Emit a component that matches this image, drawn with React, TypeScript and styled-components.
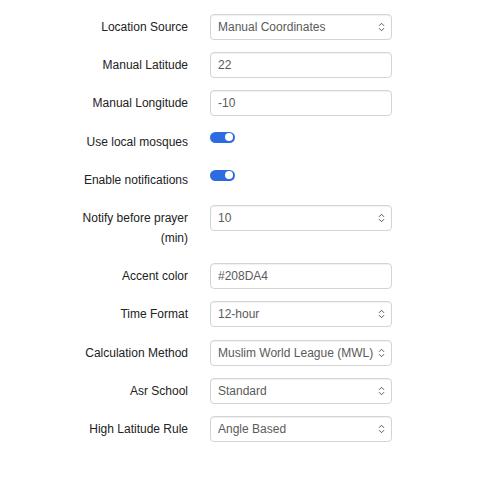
import styled, { createGlobalStyle } from 'styled-components';

const GlobalStyle = createGlobalStyle`
  body {
    margin: 0;
    background: #fff;
    font-family: "Liberation Sans", Arial, sans-serif;
  }
`;

const Form = styled.form`
  padding: 14px 0 0 68px;
`;

const Row = styled.div`
  display: grid;
  grid-template-columns: 120px 182px;
  column-gap: 22px;
  align-items: start;
  margin-bottom: 12.2px;
`;

const Label = styled.label`
  text-align: right;
  font-size: 12px;
  line-height: 20px;
  padding: 3px 0;
  color: #222;
`;

const fieldBase = `
  box-sizing: border-box;
  width: 100%;
  height: 26px;
  padding: 0 7px;
  border: 1px solid #d4d4d4;
  border-radius: 4px;
  background: #fff;
  box-shadow: inset 0 1px 1px rgba(0, 0, 0, 0.06);
  font-family: "Liberation Sans", Arial, sans-serif;
  font-size: 12px;
  color: #5a5a5a;
  outline: none;
`;

const TextInput = styled.input`
  ${fieldBase}
`;

const SelectWrap = styled.div`
  position: relative;
`;

const Select = styled.select`
  ${fieldBase}
  appearance: none;
  -webkit-appearance: none;
  padding-right: 14px;
`;

const Chevron = styled.svg`
  position: absolute;
  right: 7px;
  top: 8px;
  pointer-events: none;
`;

const Toggle = styled.span<{ $on: boolean }>`
  display: flex;
  justify-content: ${(p) => (p.$on ? 'flex-end' : 'flex-start')};
  align-items: center;
  box-sizing: border-box;
  width: 25px;
  height: 11px;
  margin-top: 3px;
  padding: 0 2px;
  border-radius: 6px;
  background: ${(p) => (p.$on ? '#2e6be0' : '#ccc')};
`;

const Knob = styled.span`
  width: 8px;
  height: 8px;
  border-radius: 50%;
  background: #fff;
`;

const SelectField = ({ value }: { value: string }) => (
  <SelectWrap>
    <Select defaultValue={value}>
      <option>{value}</option>
    </Select>
    <Chevron width="7" height="10" viewBox="0 0 7 10" fill="none" stroke="#555" strokeWidth="1">
      <path d="M1 3.8 L3.5 1.3 L6 3.8" />
      <path d="M1 6.2 L3.5 8.7 L6 6.2" />
    </Chevron>
  </SelectWrap>
);

type Field =
  | { label: string; kind: 'select'; value: string }
  | { label: string; kind: 'text'; value: string }
  | { label: string; kind: 'toggle'; on: boolean };

const fields: Field[] = [
  { label: 'Location Source', kind: 'select', value: 'Manual Coordinates' },
  { label: 'Manual Latitude', kind: 'text', value: '22' },
  { label: 'Manual Longitude', kind: 'text', value: '-10' },
  { label: 'Use local mosques', kind: 'toggle', on: true },
  { label: 'Enable notifications', kind: 'toggle', on: true },
  { label: 'Notify before prayer (min)', kind: 'select', value: '10' },
  { label: 'Accent color', kind: 'text', value: '#208DA4' },
  { label: 'Time Format', kind: 'select', value: '12-hour' },
  { label: 'Calculation Method', kind: 'select', value: 'Muslim World League (MWL)' },
  { label: 'Asr School', kind: 'select', value: 'Standard' },
  { label: 'High Latitude Rule', kind: 'select', value: 'Angle Based' },
];

const App = () => {
  return (
    <>
      <GlobalStyle />
      <Form>
        {fields.map((f) => (
          <Row key={f.label}>
            <Label>{f.label}</Label>
            {f.kind === 'select' && <SelectField value={f.value} />}
            {f.kind === 'text' && <TextInput defaultValue={f.value} />}
            {f.kind === 'toggle' && (
              <Toggle $on={f.on}>
                <Knob />
              </Toggle>
            )}
          </Row>
        ))}
      </Form>
    </>
  );
};

export default App;
